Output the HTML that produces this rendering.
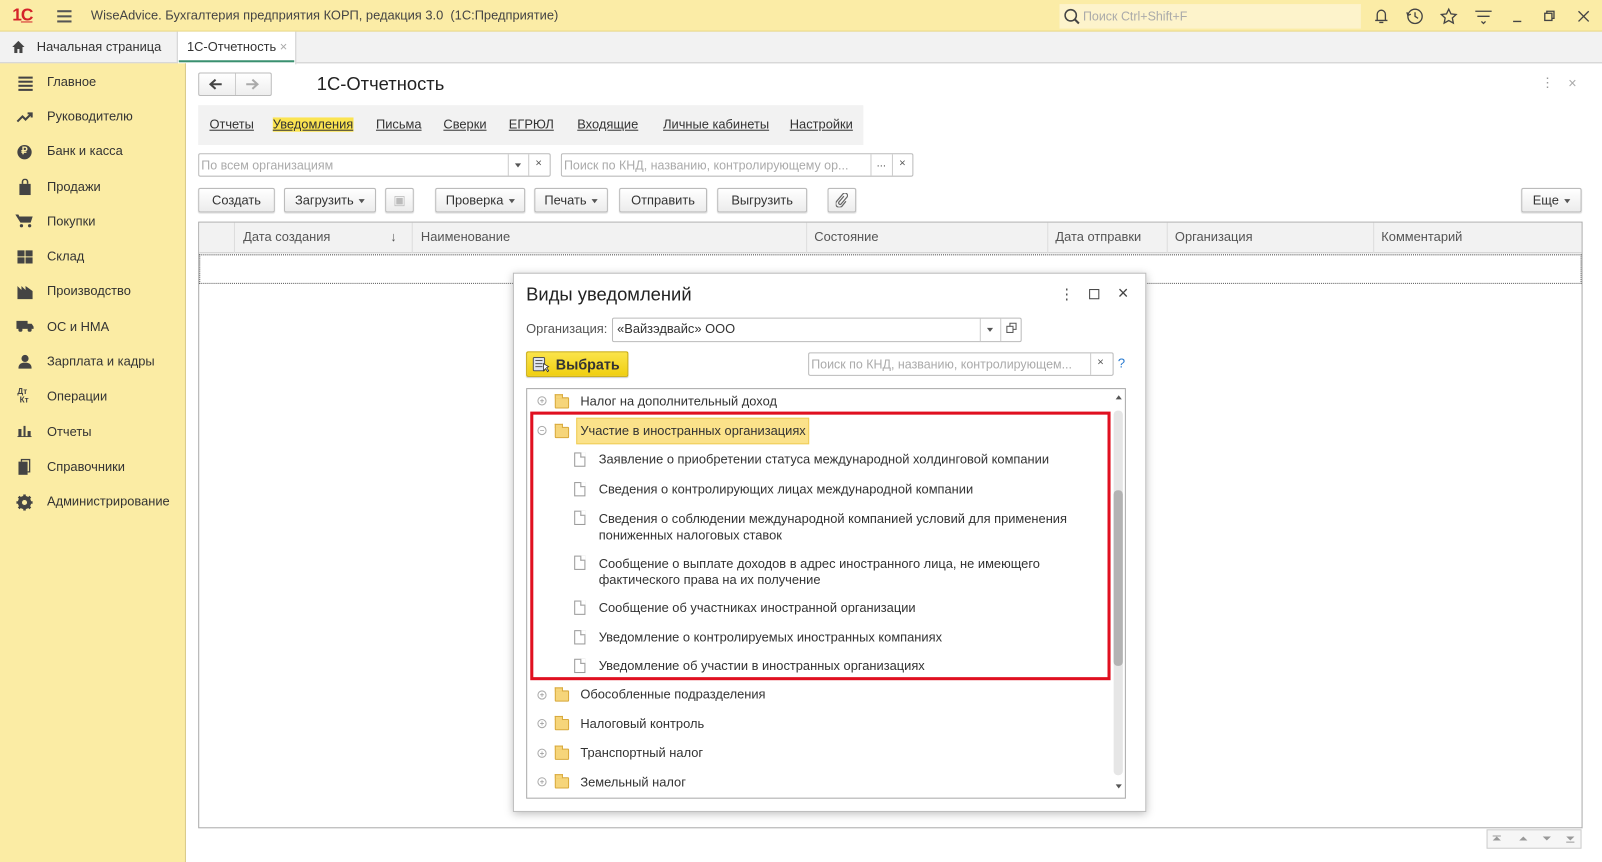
<!DOCTYPE html>
<html><head><meta charset="utf-8"><style>
*{box-sizing:border-box;margin:0;padding:0}
html,body{width:1602px;height:862px;overflow:hidden;background:#fff}
#w{position:absolute;left:0;top:0;width:1568px;height:844px;transform:scale(1.02168,1.02133);transform-origin:0 0;font-family:"Liberation Sans",Arial,sans-serif;font-size:12.6px;color:#333}
.a{position:absolute}
.t{position:absolute;white-space:nowrap}
.btn{position:absolute;height:24px;border:1px solid #bbb;border-radius:2px;background:linear-gradient(#fff,#ececec);box-shadow:0 1px 1px rgba(0,0,0,.15);text-align:center;line-height:22px;font-size:12.6px;color:#333}
.arr{display:inline-block;border-left:3px solid transparent;border-right:3px solid transparent;border-top:4px solid #555;vertical-align:middle;margin-left:5px}
.inp{position:absolute;height:24px;border:1px solid #bbb;border-radius:2px;background:#fff}
.ph{color:#aaa;font-size:12.2px}
.st{position:absolute;left:46px;font-size:12.6px;color:#333}
.nl{position:absolute;top:115px;text-decoration:underline;color:#333}
.hd{position:absolute;top:225px;color:#555}
.fold{position:absolute;left:543px;width:14px;height:11px;background:#f6d57a;border:1px solid #d8a93c;border-radius:1px}
.fold:before{content:"";position:absolute;left:-1px;top:-4px;width:6px;height:3px;background:#f6d57a;border:1px solid #d8a93c;border-bottom:none}
.pl{position:absolute;left:526px;width:9px;height:9px;border:1px solid #aaa;border-radius:50%;font-size:8px;line-height:7px;text-align:center;color:#888}
.doc{position:absolute;left:562px;width:11px;height:14px;border:1px solid #999;background:#fff}
.doc:after{content:"";position:absolute;right:-1px;top:-1px;width:4px;height:4px;background:#fff;border-left:1px solid #999;border-bottom:1px solid #999}
.tr{position:absolute;font-size:12.6px;color:#333;white-space:nowrap}
</style></head><body><div id="w">
<div class="a" style="left:0;top:0;width:1568px;height:31px;background:#fbeca6;border-bottom:1px solid #e6d480"></div>
<div class="t" style="left:12px;top:5px;font-size:17px;font-weight:bold;color:#d4222a;letter-spacing:-1px">1<span style="text-decoration:underline">С</span></div>
<div class="a" style="left:56px;top:10px;width:14px;height:2px;background:#555;box-shadow:0 5px 0 #555,0 10px 0 #555"></div>
<div class="t" style="left:89px;top:8px;font-size:12.6px;color:#444">WiseAdvice. Бухгалтерия предприятия КОРП, редакция 3.0&nbsp; (1С:Предприятие)</div>
<div class="a" style="left:1037px;top:4px;width:295px;height:24px;background:#fdf3cb"></div>
<svg class="a" style="left:1041px;top:8px" width="16" height="16"><circle cx="7" cy="7" r="5.5" fill="none" stroke="#444" stroke-width="1.5"/><path d="M11 11l4 4" stroke="#444" stroke-width="2"/></svg>
<div class="t ph" style="left:1060px;top:9px">Поиск Ctrl+Shift+F</div>
<svg class="a" style="left:1342px;top:6px" width="220" height="20" fill="none" stroke="#444" stroke-width="1.3">
<path d="M4 14h12M6 14V8a4 4 0 018 0v6M8 16h4"/>
<circle cx="43" cy="10" r="7"/><path d="M43 6v4l3 2M35 6l1 3 3-1"/>
<path d="M76 3l2.2 4.6 5 .6-3.7 3.4 1 5-4.5-2.5-4.5 2.5 1-5-3.7-3.4 5-.6z"/>
<path d="M102 5h16M104 10h12M108 15l2 2 2-2"/>
<path d="M139 15h8"/>
<rect x="170" y="7" width="7" height="7"/><path d="M172 7V5h7v7h-2"/>
<path d="M203 5l10 10M213 5l-10 10"/>
</svg>
<div class="a" style="left:0;top:31px;width:1568px;height:31px;background:#f2f2f2;border-bottom:1px solid #ccc"></div>
<svg class="a" style="left:11px;top:39px" width="14" height="13"><path d="M7 1L1 7h2v6h3V9h2v4h3V7h2z" fill="#444"/></svg>
<div class="t" style="left:36px;top:39px;color:#333">Начальная страница</div>
<div class="a" style="left:173px;top:31px;width:117px;height:32px;background:#fff;border-left:1px solid #ccc;border-right:1px solid #ccc"></div>
<div class="a" style="left:175px;top:59px;width:113px;height:2px;background:#3a9070"></div>
<div class="t" style="left:183px;top:39px;color:#333">1С-Отчетность <span style="color:#aaa">×</span></div>
<div class="a" style="left:0;top:62px;width:182px;height:782px;background:#fbeca4;border-right:1px solid #d8c98a"></div>
<div class="a" style="left:18px;top:75px;width:14px;height:2px;background:#444;box-shadow:0 4px 0 #444,0 8px 0 #444,0 12px 0 #444"></div><div class="st" style="top:73px">Главное</div>
<svg class="a" style="left:16px;top:109px" width="18" height="12"><path d="M1 10l5-5 3 3 6-6M11 2h4v4" fill="none" stroke="#444" stroke-width="2"/></svg><div class="st" style="top:107px">Руководителю</div>
<div class="a" style="left:17px;top:142px;width:14px;height:14px;border-radius:50%;background:#444;color:#fbeca4;font-size:10px;font-weight:bold;text-align:center;line-height:14px">₽</div><div class="st" style="top:141px">Банк и касса</div>
<svg class="a" style="left:18px;top:175px" width="13" height="16"><path d="M4 5V3a2.5 2.5 0 015 0v2" fill="none" stroke="#444" stroke-width="1.5"/><path d="M1 5h11v11H1z" fill="#444"/></svg><div class="st" style="top:176px">Продажи</div>
<svg class="a" style="left:15px;top:209px" width="18" height="14"><path d="M0 1h3l1 2h13l-2 6H5z" fill="#444"/><circle cx="6" cy="12" r="1.6" fill="#444"/><circle cx="14" cy="12" r="1.6" fill="#444"/></svg><div class="st" style="top:210px">Покупки</div>
<svg class="a" style="left:17px;top:245px" width="15" height="14"><path d="M0 0h7v6H0zM8 0h7v6H8zM0 7h7v6H0zM8 7h7v6H8z" fill="#444"/></svg><div class="st" style="top:244px">Склад</div>
<svg class="a" style="left:17px;top:278px" width="15" height="15"><path d="M0 15V2l4 4V2l4 4V2l7 5v8z" fill="#444"/></svg><div class="st" style="top:278px">Производство</div>
<svg class="a" style="left:16px;top:314px" width="17" height="11"><path d="M0 0h11v8H0zM11 3h4l2 3v2h-6z" fill="#444"/><circle cx="4" cy="9" r="2" fill="#444"/><circle cx="13" cy="9" r="2" fill="#444"/></svg><div class="st" style="top:313px">ОС и НМА</div>
<svg class="a" style="left:18px;top:347px" width="13" height="14"><circle cx="6.5" cy="4" r="3.5" fill="#444"/><path d="M0 14c0-5 3-6 6.5-6S13 9 13 14z" fill="#444"/></svg><div class="st" style="top:347px">Зарплата и кадры</div>
<div class="t" style="left:17px;top:380px;font-size:8px;font-weight:bold;color:#444;line-height:8px">Дт<br>&nbsp;Кт</div><div class="st" style="top:381px">Операции</div>
<svg class="a" style="left:17px;top:416px" width="14" height="12"><path d="M0 11h14v1H0zM1 4h3v7H1zM6 1h2v10H6zM10 6h3v5h-3z" fill="#444"/></svg><div class="st" style="top:416px">Отчеты</div>
<svg class="a" style="left:18px;top:449px" width="13" height="16"><rect x="0" y="3" width="9" height="13" fill="#444"/><path d="M3 3V1h8v12h-2" fill="none" stroke="#444" stroke-width="1.3"/></svg><div class="st" style="top:450px">Справочники</div>
<svg class="a" style="left:16px;top:484px" width="16" height="16"><circle cx="8" cy="8" r="5" fill="none" stroke="#444" stroke-width="3"/><path d="M8 0v16M0 8h16M2.3 2.3l11.4 11.4M13.7 2.3L2.3 13.7" stroke="#444" stroke-width="2.5"/><circle cx="8" cy="8" r="2.5" fill="#fbeca4"/></svg><div class="st" style="top:484px">Администрирование</div>
<div class="a" style="left:194px;top:71px;width:72px;height:23px;border:1px solid #bbb;border-radius:2px;background:linear-gradient(#fff,#eee)"></div>
<div class="a" style="left:230px;top:72px;width:1px;height:21px;background:#ccc"></div>
<svg class="a" style="left:204px;top:76px" width="56" height="13"><path d="M2 6.5h11M7 2L2 6.5 7 11" fill="none" stroke="#444" stroke-width="2"/><path d="M37 6.5h11M43 2l5 4.5-5 4.5" fill="none" stroke="#aaa" stroke-width="2"/></svg>
<div class="t" style="left:310px;top:72px;font-size:18px;color:#222">1С-Отчетность</div>
<div class="t" style="left:1508px;top:73px;color:#999;font-size:13px">⋮</div>
<div class="t" style="left:1535px;top:73px;color:#aaa;font-size:14px">×</div>
<div class="a" style="left:194px;top:103px;width:651px;height:39px;background:#f2f2f2"></div>
<div class="nl" style="left:205px">Отчеты</div>
<div class="nl" style="left:267px;background:#fbe451">Уведомления</div>
<div class="nl" style="left:368px">Письма</div>
<div class="nl" style="left:434px">Сверки</div>
<div class="nl" style="left:498px">ЕГРЮЛ</div>
<div class="nl" style="left:565px">Входящие</div>
<div class="nl" style="left:649px">Личные кабинеты</div>
<div class="nl" style="left:773px">Настройки</div>
<div class="inp" style="left:194px;top:150px;width:345px;height:23px"></div>
<div class="a" style="left:497px;top:151px;width:1px;height:21px;background:#ccc"></div>
<div class="a" style="left:517px;top:151px;width:1px;height:21px;background:#ccc"></div>
<div class="t ph" style="left:197px;top:155px">По всем организациям</div>
<div class="a" style="left:504px;top:160px;border-left:3px solid transparent;border-right:3px solid transparent;border-top:4px solid #555"></div>
<div class="t" style="left:524px;top:154px;font-size:11px;color:#555">×</div>
<div class="inp" style="left:549px;top:150px;width:345px;height:23px"></div>
<div class="a" style="left:852px;top:151px;width:1px;height:21px;background:#ccc"></div>
<div class="a" style="left:873px;top:151px;width:1px;height:21px;background:#ccc"></div>
<div class="t ph" style="left:552px;top:155px">Поиск по КНД, названию, контролирующему ор...</div>
<div class="t" style="left:858px;top:154px;font-size:11px;color:#555">...</div>
<div class="t" style="left:880px;top:154px;font-size:11px;color:#555">×</div>
<div class="btn" style="left:194px;top:184px;width:75px">Создать</div>
<div class="btn" style="left:278px;top:184px;width:90px">Загрузить<span class="arr"></span></div>
<div class="btn" style="left:377px;top:184px;width:28px;color:#bbb">▣</div>
<div class="btn" style="left:426px;top:184px;width:88px">Проверка<span class="arr"></span></div>
<div class="btn" style="left:523px;top:184px;width:72px">Печать<span class="arr"></span></div>
<div class="btn" style="left:606px;top:184px;width:86px">Отправить</div>
<div class="btn" style="left:702px;top:184px;width:88px">Выгрузить</div>
<div class="btn" style="left:810px;top:184px;width:28px"><svg width="12" height="14" style="margin-top:4px"><path d="M8 3L3 9a1.5 1.5 0 002 2l6-7a2.5 2.5 0 00-4-3L1 8a3.5 3.5 0 005 5l4-5" fill="none" stroke="#666" stroke-width="1.2"/></svg></div>
<div class="btn" style="left:1489px;top:184px;width:59px">Еще<span class="arr"></span></div>
<div class="a" style="left:194px;top:217px;width:1355px;height:594px;border:1px solid #aaa"></div>
<div class="a" style="left:195px;top:218px;width:1353px;height:30px;background:#f2f2f2;border-bottom:1px solid #ccc"></div>
<div class="a" style="left:229px;top:218px;width:1px;height:30px;background:#ddd"></div>
<div class="a" style="left:403px;top:218px;width:1px;height:30px;background:#ddd"></div>
<div class="a" style="left:789px;top:218px;width:1px;height:30px;background:#ddd"></div>
<div class="a" style="left:1025px;top:218px;width:1px;height:30px;background:#ddd"></div>
<div class="a" style="left:1142px;top:218px;width:1px;height:30px;background:#ddd"></div>
<div class="a" style="left:1344px;top:218px;width:1px;height:30px;background:#ddd"></div>
<div class="hd" style="left:238px">Дата создания</div>
<div class="hd" style="left:382px">↓</div>
<div class="hd" style="left:412px">Наименование</div>
<div class="hd" style="left:797px">Состояние</div>
<div class="hd" style="left:1033px">Дата отправки</div>
<div class="hd" style="left:1150px">Организация</div>
<div class="hd" style="left:1352px">Комментарий</div>
<div class="a" style="left:195px;top:249px;width:1353px;height:29px;border:1px dotted #555"></div>
<div class="a" style="left:1455px;top:812px;width:93px;height:19px;border:1px solid #ccc;background:#f6f6f6"></div>
<svg class="a" style="left:1458px;top:815px" width="88" height="12" fill="#999"><path d="M3 8l4-4 4 4zM3 3h8v1H3zM29 8l4-4 4 4zM52 4l4 4 4-4zM75 4l4 4 4-4zM75 9h8v1h-8z"/></svg>
<div class="a" style="left:502px;top:267px;width:620px;height:528px;background:#fff;border:1px solid #bbb;box-shadow:0 2px 8px rgba(0,0,0,.25)"></div>
<div class="t" style="left:515px;top:278px;font-size:18px;color:#222">Виды уведомлений</div>
<div class="t" style="left:1037px;top:280px;color:#555;font-size:14px">⋮</div>
<div class="a" style="left:1066px;top:283px;width:10px;height:10px;border:1.3px solid #444"></div>
<div class="t" style="left:1094px;top:277px;color:#444;font-size:18px">×</div>
<div class="t" style="left:515px;top:315px;color:#555">Организация:</div>
<div class="inp" style="left:599px;top:311px;width:401px;height:24px"></div>
<div class="a" style="left:959px;top:312px;width:1px;height:22px;background:#ccc"></div>
<div class="a" style="left:979px;top:312px;width:1px;height:22px;background:#ccc"></div>
<div class="t" style="left:604px;top:315px;color:#333">«Вайзэдвайс» ООО</div>
<div class="a" style="left:966px;top:321px;border-left:3px solid transparent;border-right:3px solid transparent;border-top:4px solid #555"></div>
<svg class="a" style="left:984px;top:315px" width="12" height="12" fill="none" stroke="#555"><rect x="1.5" y="4.5" width="6" height="6"/><path d="M4.5 4.5V1.5h6v6h-3"/></svg>
<div class="a" style="left:515px;top:344px;width:100px;height:25px;border:1px solid #c8a800;border-radius:2px;background:linear-gradient(#fbe44a,#f0cf10);box-shadow:0 1px 1px rgba(0,0,0,.2)"></div>
<svg class="a" style="left:521px;top:349px" width="18" height="16"><rect x="1" y="1" width="11" height="13" rx="1" fill="#dfe4f0" stroke="#555"/><path d="M3 4h7M3 7h7M3 10h7" stroke="#555"/><path d="M11 7l5 3-2 1 2 3-1 1-2-3-2 2z" fill="#fff" stroke="#333" stroke-width=".8"/></svg>
<div class="t" style="left:544px;top:349px;font-size:14px;font-weight:bold;color:#333">Выбрать</div>
<div class="inp" style="left:791px;top:345px;width:299px;height:23px"></div>
<div class="a" style="left:1067px;top:346px;width:1px;height:21px;background:#ccc"></div>
<div class="t ph" style="left:794px;top:350px">Поиск по КНД, названию, контролирующем...</div>
<div class="t" style="left:1074px;top:349px;font-size:11px;color:#555">×</div>
<div class="t" style="left:1094px;top:348px;font-size:13px;color:#2a7bd0">?</div>
<div class="a" style="left:515px;top:380px;width:587px;height:402px;border:1px solid #aaa"></div>
<div class="a" style="left:1090px;top:402px;width:9px;height:357px;background:#e6e6e6;border-radius:4px"></div>
<div class="a" style="left:1090px;top:480px;width:9px;height:172px;background:#b3b3b3;border-radius:4px"></div>
<div class="a" style="left:1092px;top:387px;border-left:3px solid transparent;border-right:3px solid transparent;border-bottom:4px solid #555"></div>
<div class="a" style="left:1092px;top:768px;border-left:3px solid transparent;border-right:3px solid transparent;border-top:4px solid #555"></div>
<div class="pl" style="top:388px">+</div><div class="fold" style="top:389px"></div><div class="tr" style="left:568px;top:386px">Налог на дополнительный доход</div>
<div class="a" style="left:564px;top:409px;width:228px;height:26px;background:#fbe28a;border:1px solid #efcc56"></div>
<div class="pl" style="top:417px">−</div><div class="fold" style="top:418px"></div><div class="tr" style="left:568px;top:415px">Участие в иностранных организациях</div>
<div class="doc" style="top:443px"></div><div class="tr" style="left:586px;top:443px">Заявление о приобретении статуса международной холдинговой компании</div>
<div class="doc" style="top:472px"></div><div class="tr" style="left:586px;top:472px">Сведения о контролирующих лицах международной компании</div>
<div class="doc" style="top:500px"></div><div class="tr" style="left:586px;top:500px;line-height:16px">Сведения о соблюдении международной компанией условий для применения<br>пониженных налоговых ставок</div>
<div class="doc" style="top:544px"></div><div class="tr" style="left:586px;top:544px;line-height:16px">Сообщение о выплате доходов в адрес иностранного лица, не имеющего<br>фактического права на их получение</div>
<div class="doc" style="top:588px"></div><div class="tr" style="left:586px;top:588px">Сообщение об участниках иностранной организации</div>
<div class="doc" style="top:617px"></div><div class="tr" style="left:586px;top:617px">Уведомление о контролируемых иностранных компаниях</div>
<div class="doc" style="top:645px"></div><div class="tr" style="left:586px;top:645px">Уведомление об участии в иностранных организациях</div>
<div class="pl" style="top:676px">+</div><div class="fold" style="top:676px"></div><div class="tr" style="left:568px;top:673px">Обособленные подразделения</div>
<div class="pl" style="top:704px">+</div><div class="fold" style="top:704px"></div><div class="tr" style="left:568px;top:702px">Налоговый контроль</div>
<div class="pl" style="top:733px">+</div><div class="fold" style="top:733px"></div><div class="tr" style="left:568px;top:730px">Транспортный налог</div>
<div class="pl" style="top:761px">+</div><div class="fold" style="top:761px"></div><div class="tr" style="left:568px;top:759px">Земельный налог</div>
<div class="a" style="left:519px;top:403px;width:568px;height:263px;border:3px solid #e01020"></div>
</div></body></html>
